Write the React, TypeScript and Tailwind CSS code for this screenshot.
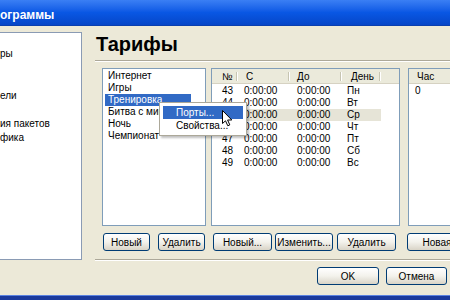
import React from 'react';

const rows = [
  { n: '43', d: 'Пн' },
  { n: '44', d: 'Вт' },
  { n: '45', d: 'Ср' },
  { n: '46', d: 'Чт' },
  { n: '47', d: 'Пт' },
  { n: '48', d: 'Сб' },
  { n: '49', d: 'Вс' },
];

const tariffs = ['Интернет', 'Игры', 'Тренировка', 'Битва с мишенями', 'Ночь', 'Чемпионат'];

function XpButton({ label, w }: { label: string; w: string }) {
  return (
    <div
      className={`${w} h-[18px] shrink-0 rounded-[3px] border border-[#003c74] bg-linear-to-b from-[#ffffff] via-[#f3f2ec] to-[#d9d4c7] flex items-center justify-center text-[10px] text-black`}
    >
      {label}
    </div>
  );
}

function HeadCell({ label, w, pl }: { label: string; w: string; pl: string }) {
  return (
    <div className={`${w} ${pl} h-full shrink-0 flex items-center justify-between`}>
      <span>{label}</span>
      <div className="w-[2px] h-[9px] border-l border-[#c7c5b2] border-r border-r-white" />
    </div>
  );
}

export default function App() {
  return (
    <div className="relative w-[450px] h-[300px] overflow-hidden bg-[#ece9d8] flex flex-col font-['Liberation_Sans',Arial,sans-serif] text-black">
      {/* title bar */}
      <div className="h-[26px] shrink-0 pt-[4px] flex items-center bg-linear-to-b from-[#3a7ff4] via-[#0957e4] to-[#0646c8] border-b border-[#0a3fae]">
        <span className="text-white font-bold text-[12px] leading-none">ограммы</span>
      </div>

      <div className="flex-1 flex min-h-0">
        {/* left tree panel */}
        <div className="mt-[6px] w-[82px] h-[228px] shrink-0 bg-white border-y border-r border-[#8a9bb4] pt-[14px] text-[10px]">
          {['ры', '', '', 'ели', '', 'ия пакетов', 'фика'].map((t, i) => (
            <div key={i} className="h-[14px] leading-[14px] whitespace-nowrap">
              {t}
            </div>
          ))}
        </div>

        {/* right content */}
        <div className="ml-[14px] flex-1 min-w-0 flex flex-col pt-[6px]">
          <div className="text-[20px] leading-[24px] font-bold">Тарифы</div>
          <div className="mt-[4px] -ml-[1px] h-[2px] border-t border-[#aca899] border-b border-b-white" />

          <div className="mt-[6px] pl-[6px] flex items-start">
            {/* tariffs list */}
            <div className="flex flex-col shrink-0">
              <div className="w-[104px] h-[158px] bg-white border border-[#7f9db9] pt-[1px] pl-[2px] text-[10px]">
                {tariffs.map((t, i) => (
                  <div
                    key={t}
                    className={`w-[86px] h-[12px] leading-[12px] pl-[3px] whitespace-nowrap ${
                      i === 2 ? 'bg-[#316ac5] text-white' : ''
                    }`}
                  >
                    {t}
                  </div>
                ))}
              </div>
              <div className="mt-[7px] ml-[1px] flex gap-[8px]">
                <XpButton label="Новый" w="w-[47px]" />
                <XpButton label="Удалить" w="w-[47px]" />
              </div>
            </div>

            {/* schedule list */}
            <div className="ml-[5px] flex flex-col shrink-0">
              <div className="w-[189px] h-[158px] bg-white border border-[#7f9db9] text-[10px]">
                <div className="h-[15px] flex bg-[#ebeadb] border-b border-[#d6d2c2]">
                  <HeadCell label="№" w="w-[26px]" pl="pl-[10px]" />
                  <HeadCell label="С" w="w-[52px]" pl="pl-[8px]" />
                  <HeadCell label="До" w="w-[52px]" pl="pl-[7px]" />
                  <HeadCell label="День" w="w-[39px]" pl="pl-[9px]" />
                </div>
                <div className="pt-[1px]">
                  {rows.map((r, i) => (
                    <div
                      key={r.n}
                      className={`w-[169px] h-[12px] leading-[12px] flex ${i === 2 ? 'bg-[#e6e4d7]' : ''}`}
                    >
                      <div className="w-[26px] pl-[10px] shrink-0">{r.n}</div>
                      <div className="w-[52px] pl-[6px] shrink-0">0:00:00</div>
                      <div className="w-[52px] pl-[7px] shrink-0">0:00:00</div>
                      <div className="w-[39px] pl-[5px] shrink-0">{r.d}</div>
                    </div>
                  ))}
                </div>
              </div>
              <div className="mt-[7px] ml-[2px] flex">
                <XpButton label="Новый..." w="w-[59px]" />
                <div className="ml-[3px]">
                  <XpButton label="Изменить..." w="w-[58px]" />
                </div>
                <div className="ml-[4px]">
                  <XpButton label="Удалить" w="w-[59px]" />
                </div>
              </div>
            </div>

            {/* hours list */}
            <div className="ml-[8px] flex flex-col shrink-0">
              <div className="w-[70px] h-[158px] bg-white border border-[#7f9db9] text-[10px]">
                <div className="h-[15px] flex items-center pl-[8px] bg-[#ebeadb] border-b border-[#d6d2c2]">Час</div>
                <div className="pt-[1px] pl-[6px] h-[12px] leading-[12px]">0</div>
              </div>
              <div className="mt-[7px] -ml-[1px] flex">
                <XpButton label="Новая" w="w-[60px]" />
              </div>
            </div>
          </div>

          <div className="mt-[8px] -ml-[1px] h-[2px] border-t border-[#aca899] border-b border-b-white" />

          <div className="mt-[6px] pr-[3px] flex justify-end gap-[7px]">
            <XpButton label="OK" w="w-[62px]" />
            <XpButton label="Отмена" w="w-[61px]" />
          </div>
        </div>
      </div>

      {/* taskbar edge */}
      <div className="h-[5px] shrink-0 bg-[#1a3a9c] border-t border-[#5a82e0]" />

      {/* context menu */}
      <div className="absolute left-[159px] top-[102px] w-[88px] bg-white border border-[#aca899] py-[3px] px-[3px] text-[10px] shadow-[2px_2px_2px_rgba(0,0,0,0.25)]">
        <div className="h-[13px] leading-[13px] pl-[13px] bg-[#316ac5] text-white">Порты...</div>
        <div className="h-[13px] leading-[13px] pl-[13px]">Свойства...</div>
      </div>

      {/* mouse cursor */}
      <svg className="absolute left-[222px] top-[110px]" width="12" height="17" viewBox="0 0 12 17">
        <path
          d="M0.5 0.5 L0.5 13.5 L3.5 10.8 L5.8 15.8 L7.8 14.9 L5.6 10 L9.8 10 Z"
          fill="white"
          stroke="black"
          strokeWidth="1"
          strokeLinejoin="miter"
        />
      </svg>
    </div>
  );
}
